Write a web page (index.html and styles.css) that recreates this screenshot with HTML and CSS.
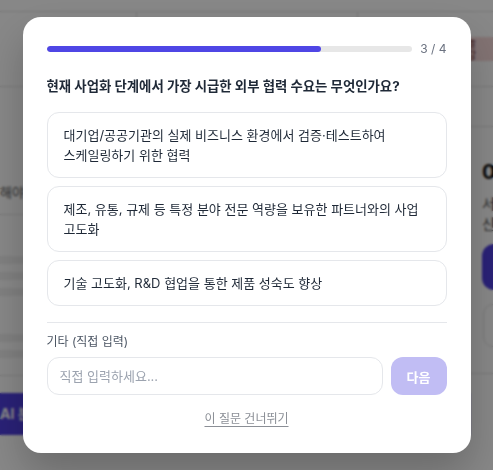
FILE: index.html
```html
<!DOCTYPE html>
<html lang="ko">
<head>
<meta charset="utf-8">
<title>설문</title>
<link rel="stylesheet" href="styles.css">
</head>
<body>
<div class="page">
  <div class="strip"></div>
  <div class="stats">
    <div class="stat"></div>
    <div class="stat"></div>
    <div class="stat stat-last"><span class="badge">오늘 마감</span></div>
  </div>
  <div class="main">
    <div class="left-panel">
      <div class="left-head"></div>
      <p class="left-text">해야 할 일을 정리해 보세요</p>
      <div class="left-list">
        <div class="bar"></div>
        <div class="bar"></div>
        <div class="bar"></div>
        <div class="bar bar-gap"></div>
        <div class="bar"></div>
      </div>
      <div class="left-foot">
        <div class="ai-btn">AI 분석 시작하기</div>
      </div>
    </div>
    <div class="right-panel">
      <div class="right-head"></div>
      <div class="right-body">
        <div class="big-num">0</div>
        <p class="right-desc">서비스 신청 현황<br>신규 요청 없음</p>
        <div class="primary-btn"></div>
        <div class="outline-btn"></div>
      </div>
      <div class="right-foot"></div>
    </div>
  </div>
</div>

<div class="overlay">
  <div class="modal">
    <div class="progress-row">
      <div class="track"><div class="fill" style="width:75%"></div></div>
      <span class="step">3 / 4</span>
    </div>
    <h2 class="question">현재 사업화 단계에서 가장 시급한 외부 협력 수요는 무엇인가요?</h2>
    <div class="options">
      <button class="option">대기업/공공기관의 실제 비즈니스 환경에서 검증·테스트하여 스케일링하기 위한 협력</button>
      <button class="option">제조, 유통, 규제 등 특정 분야 전문 역량을 보유한 파트너와의 사업 고도화</button>
      <button class="option">기술 고도화, R&amp;D 협업을 통한 제품 성숙도 향상</button>
    </div>
    <div class="other">
      <label class="other-label" for="other-input">기타 (직접 입력)</label>
      <div class="other-row">
        <input id="other-input" class="other-input" type="text" placeholder="직접 입력하세요...">
        <button class="next-btn">다음</button>
      </div>
    </div>
    <div class="skip-row"><a class="skip" href="#">이 질문 건너뛰기</a></div>
  </div>
</div>
</body>
</html>
```

FILE: styles.css
```css
* { box-sizing: border-box; }
html, body { margin: 0; padding: 0; }
body {
  width: 493px;
  height: 470px;
  overflow: hidden;
  background: #ffffff;
  font-family: Inter, "Noto Sans CJK KR", sans-serif;
  color: #1f2937;
}

/* ---------- background page ---------- */
.page { width: 493px; height: 470px; overflow: hidden; }
.strip { height: 12px; border-bottom: 1px solid #e3e3e3; }
.stats {
  display: grid;
  grid-template-columns: 137px 221px 1fr;
  height: 75px;
  border-bottom: 1px solid #e3e3e3;
}
.stat { border-right: 1px solid #e3e3e3; }
.stat-last { border-right: none; padding: 25px 0 0 92px; }
.badge {
  display: inline-block;
  background: #f6d9d9;
  color: #6b2a2a;
  font-size: 11px;
  line-height: 12px;
  padding: 0 6px;
}
.main {
  display: grid;
  grid-template-columns: 470px 1fr;
}
.left-panel { display: flex; flex-direction: column; }
.left-head { height: 0; }
.left-text {
  margin: 97px 0 0 0;
  font-size: 13px;
  line-height: 16px;
  color: #555;
  white-space: nowrap;
}
.left-list {
  margin-top: 14px;
  border-top: 1px solid #e3e3e3;
  padding-top: 41px;
  display: flex;
  flex-direction: column;
  gap: 8px;
}
.bar { height: 8px; background: #f1f1f1; }
.bar-gap { margin-top: 30px; }
.left-foot {
  margin-top: 17px;
  border-top: 1px solid #e3e3e3;
  padding-top: 17px;
}
.ai-btn {
  height: 42px;
  background: #4f3fe0;
  color: #fff;
  font-weight: 700;
  font-size: 14px;
  line-height: 42px;
  white-space: nowrap;
  overflow: hidden;
}
.right-panel { display: flex; flex-direction: column; }
.right-head { height: 40px; border-bottom: 1px solid #e3e3e3; }
.right-body { padding: 33px 0 0 12px; }
.big-num {
  font-size: 20px;
  font-weight: 700;
  line-height: 24px;
  color: #111;
}
.right-desc {
  margin: 10px 0 0 0;
  font-size: 14px;
  line-height: 20px;
  color: #555;
  white-space: nowrap;
}
.primary-btn {
  margin-top: 10px;
  height: 46px;
  width: 60px;
  border-radius: 12px;
  background: #4f3fe0;
}
.outline-btn {
  margin-top: 14px;
  margin-left: 1px;
  height: 43px;
  width: 60px;
  border-radius: 10px;
  border: 1px solid #e3e3e3;
}
.right-foot { margin-top: 26px; border-top: 1px solid #e3e3e3; }

/* ---------- overlay + modal ---------- */
.overlay {
  position: fixed;
  inset: 0;
  background: rgba(0, 0, 0, 0.47);
  backdrop-filter: blur(1px);
  display: flex;
  align-items: center;
  justify-content: center;
}
.modal {
  width: 448px;
  background: #ffffff;
  border-radius: 18px;
  padding: 24px;
  box-shadow: 0 20px 40px rgba(0, 0, 0, 0.22);
}
.progress-row {
  display: flex;
  align-items: center;
  gap: 8px;
  height: 16px;
}
.track {
  flex: 1;
  height: 6px;
  border-radius: 3px;
  background: #e7e7e7;
  overflow: hidden;
}
.fill {
  height: 100%;
  border-radius: 3px;
  background: #4f46e5;
}
.step {
  font-size: 12px;
  line-height: 16px;
  color: #6b7280;
  white-space: nowrap;
}
.question {
  margin: 19px 0 16px 0;
  font-size: 13.4px;
  line-height: 20px;
  font-weight: 700;
  color: #1f2937;
}
.options {
  display: flex;
  flex-direction: column;
  gap: 8px;
}
.option {
  display: block;
  width: 100%;
  text-align: left;
  background: #ffffff;
  border: 1px solid #e5e7eb;
  border-radius: 12px;
  padding: 12px 16px;
  font-family: inherit;
  font-size: 13px;
  line-height: 20px;
  color: #1f2937;
  word-break: keep-all;
  cursor: pointer;
}
.other {
  margin-top: 16px;
  border-top: 1px solid #e5e7eb;
  padding-top: 12px;
}
.other-label {
  display: block;
  font-size: 12px;
  line-height: 14px;
  color: #4b5563;
  margin-bottom: 8px;
}
.other-row {
  display: flex;
  gap: 8px;
}
.other-input {
  flex: 1;
  min-width: 0;
  height: 38px;
  border: 1px solid #e5e7eb;
  border-radius: 12px;
  padding: 0 12px;
  font-family: inherit;
  font-size: 13px;
  color: #1f2937;
  outline: none;
}
.other-input::placeholder { color: #9ca3af; }
.next-btn {
  width: 56px;
  height: 38px;
  border: none;
  border-radius: 12px;
  background: #c1bdf4;
  color: #ffffff;
  font-family: inherit;
  font-size: 13px;
  font-weight: 700;
}
.skip-row {
  margin-top: 12px;
  text-align: center;
  line-height: 20px;
}
.skip {
  font-size: 12px;
  color: #8b8f96;
  text-decoration: underline;
  text-underline-offset: 3px;
}
```
